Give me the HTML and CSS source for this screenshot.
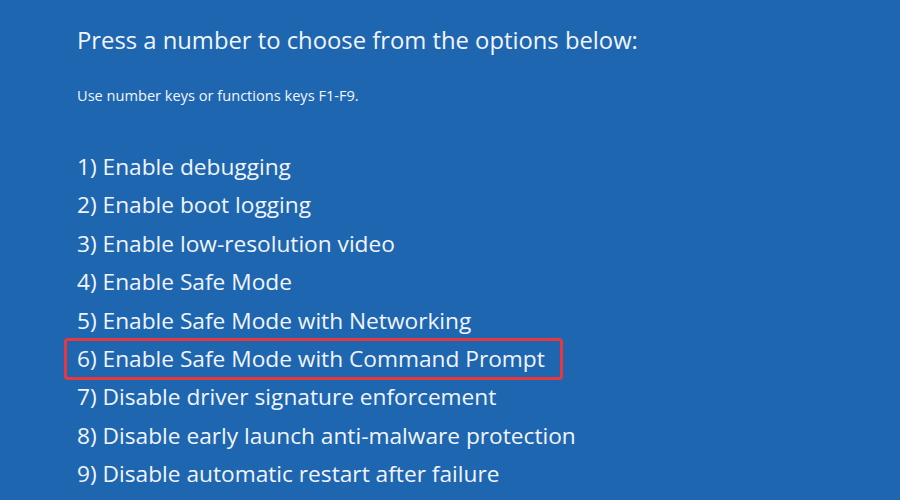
FILE: index.html
```html
<!DOCTYPE html>
<html lang="en">
<head>
    <meta charset="UTF-8">
    <title>Advanced Boot Options</title>
    <link rel="stylesheet" href="styles.css">
</head>
<body>
    <div class="screen">
        <h1 class="title">Press a number to choose from the options below:</h1>
        <p class="hint">Use number keys or functions keys F1-F9.</p>

        <ul class="options">
            <li class="option">1) Enable debugging</li>
            <li class="option">2) Enable boot logging</li>
            <li class="option">3) Enable low-resolution video</li>
            <li class="option">4) Enable Safe Mode</li>
            <li class="option">5) Enable Safe Mode with Networking</li>
            <li class="option"><span class="selected">6) Enable Safe Mode with Command Prompt</span></li>
            <li class="option">7) Disable driver signature enforcement</li>
            <li class="option">8) Disable early launch anti-malware protection</li>
            <li class="option">9) Disable automatic restart after failure</li>
        </ul>
    </div>
</body>
</html>
```

FILE: styles.css
```css
html, body {
    margin: 0;
    padding: 0;
    height: 100%;
}

body {
    background: #1f66b1;
    color: #f1f5fb;
    font-family: 'Open Sans', 'Noto Sans', sans-serif;
    overflow: hidden;
}

.screen {
    padding: 21px 0 0 77px;
}

.title {
    margin: 0;
    font-size: 23.8px;
    font-weight: 400;
    line-height: 38px;
}

.hint {
    margin: 24px 0 0;
    font-size: 14.6px;
    line-height: 24px;
}

.options {
    list-style: none;
    margin: 41px 0 0;
    padding: 0;
}

.option {
    font-size: 22.7px;
    line-height: 38.4px;
    height: 38.4px;
    white-space: nowrap;
}

.selected {
    display: inline-block;
    margin: -2px 0 0 -13px;
    padding: 0 15px 0 10px;
    border: 3px solid #e8383e;
    border-radius: 4px;
    line-height: 36px;
    vertical-align: top;
}
```
